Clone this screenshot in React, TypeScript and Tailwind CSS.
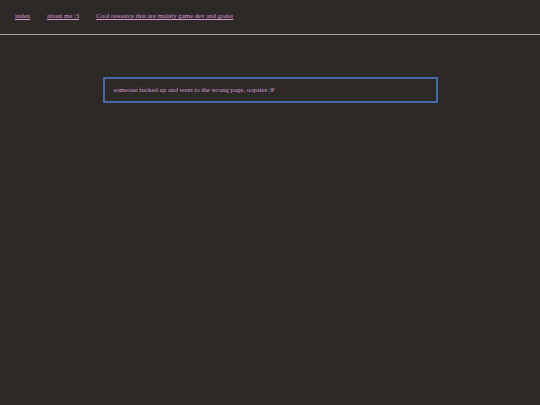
export default function App() {
  const links = ["index", "about me :3", "Cool resource that are mainly game dev and godot"];

  return (
    <div className="min-h-[405px] bg-[#2d2926] font-['Liberation_Serif',serif] text-[6.8px] text-[#d49ad4]">
      <nav className="flex gap-[17px] px-[15px] pt-[12px] pb-[14px] border-b-[1.5px] border-[#a19d99]">
        {links.map(l => (
          <a key={l} href="#" className="underline leading-[8px] text-[#d49ad4]">
            {l}
          </a>
        ))}
      </nav>
      <div className="flex justify-center pt-[42px]">
        <div className="w-[335px] h-[26px] flex items-center px-[9px] border-2 border-[#4768a8]">
          someone fucked up and went to the wrong page, oopsies :P
        </div>
      </div>
    </div>
  );
}
